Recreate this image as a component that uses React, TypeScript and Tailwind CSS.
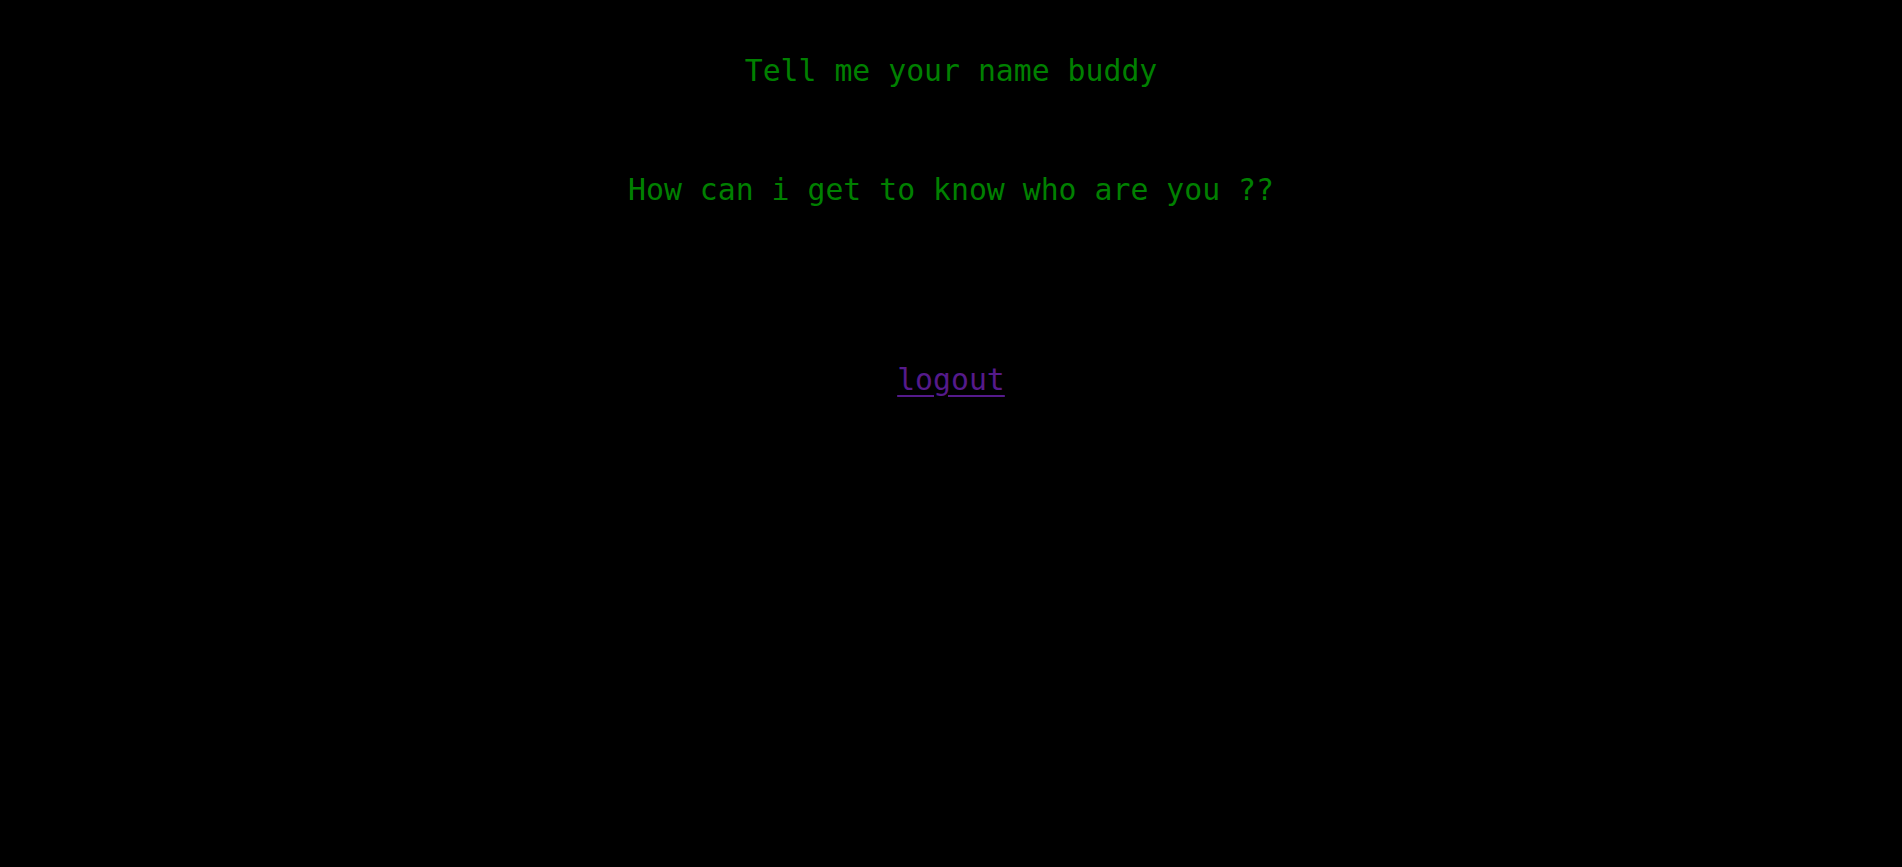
export default function App() {
    return (
        <main className="min-h-[867px] bg-black text-center font-['DejaVu_Sans_Mono',monospace] text-[29.8px] leading-[36px]">
            <div className="flex flex-col items-center pt-[53px]">
                <h2 className="text-[#008000]">Tell me your name buddy</h2>
                <p className="mt-[83px] text-[#008000]">
                    How can i get to know who are you ??
                </p>
                <a href="#" className="mt-[154px] text-[#551a8b] underline underline-offset-[5px]">
                    logout
                </a>
            </div>
        </main>
    );
}
